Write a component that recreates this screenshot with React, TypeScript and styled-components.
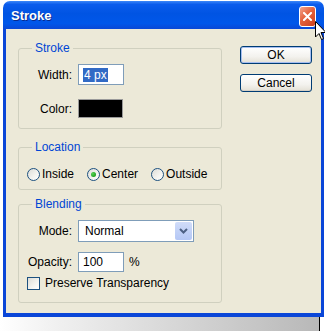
import React from 'react';
import styled, { createGlobalStyle } from 'styled-components';

const TITLE_TEXT = 'Stroke';

const GlobalStyle = createGlobalStyle`
  html, body {
    margin: 0;
    padding: 0;
    background: #FFFFFF;
  }
  body {
    font-family: "Liberation Sans", Arial, sans-serif;
    font-size: 12px;
    color: #000000;
  }
`;

const Screen = styled.div`
  position: relative;
  width: 325px;
  height: 331px;
  overflow: hidden;
  background: #FFFFFF;
  display: flex;
  flex-direction: column;
`;

const Window = styled.div`
  margin: 1px 0 0 3px;
  width: 321px;
  height: 316px;
  display: flex;
  flex-direction: column;
`;

const TitleBar = styled.div`
  height: 28px;
  flex: none;
  border-radius: 7px 7px 0 0;
  background: linear-gradient(#3C87F8 0%, #0B5CEC 12%, #0054E3 45%, #0057EA 80%, #0A48D6 100%);
  display: flex;
  align-items: center;
  padding: 0 8px 0 8px;
`;

const TitleText = styled.div`
  flex: 1;
  font-family: "Liberation Sans", Arial, sans-serif;
  font-weight: bold;
  font-size: 13px;
  color: #FFFFFF;
  text-shadow: 1px 1px 0 #0A2A8C;
`;

const CloseButton = styled.div`
  width: 17px;
  height: 21px;
  box-sizing: border-box;
  border: 1px solid #FFFFFF;
  border-radius: 3px;
  background: linear-gradient(135deg, #F3A48E 0%, #E4623C 45%, #CB3E1C 100%);
  display: flex;
  align-items: center;
  justify-content: center;
  margin-top: 2px;
`;

const Frame = styled.div`
  flex: 1;
  background: #ECE9D8;
  border-left: 3px solid #0A46D8;
  border-right: 3px solid #0A46D8;
  border-bottom: 4px solid #0A46D8;
  display: flex;
  padding: 12px 0 0 12px;
  gap: 18px;
`;

const Groups = styled.div`
  width: 204px;
  display: flex;
  flex-direction: column;
`;

const Group = styled.fieldset<{ $pad: string; $top: number }>`
  margin: ${p => p.$top}px 0 0 0;
  padding: ${p => p.$pad};
  border: 1px solid #D0D0BF;
  border-radius: 3px;
  min-width: 0;
`;

const Legend = styled.legend`
  margin-left: 13px;
  padding: 0 3px;
  color: #0046D5;
  line-height: 14px;
  font-size: 12px;
`;

const FormGrid = styled.div<{ $gap: string }>`
  display: grid;
  grid-template-columns: 53px auto;
  column-gap: 6px;
  row-gap: ${p => p.$gap};
  align-items: center;
`;

const Label = styled.div`
  text-align: right;
  line-height: 14px;
`;

const Field = styled.div<{ $w: number; $h: number }>`
  width: ${p => p.$w}px;
  height: ${p => p.$h}px;
  box-sizing: border-box;
  border: 1px solid #7F9DB9;
  background: #FFFFFF;
  display: flex;
  align-items: center;
  padding-left: 4px;
  line-height: 14px;
`;

const Selected = styled.span`
  background: #316AC5;
  color: #FFFFFF;
  padding: 0 1px;
`;

const Swatch = styled.div`
  width: 45px;
  height: 19px;
  box-sizing: border-box;
  border: 1px solid #9A9A9A;
  background: #000000;
`;

const SelectBox = styled.div`
  width: 116px;
  height: 22px;
  box-sizing: border-box;
  border: 1px solid #7F9DB9;
  background: #FFFFFF;
  display: flex;
  align-items: center;
  padding: 0 1px 0 6px;
`;

const SelectText = styled.div`
  flex: 1;
  line-height: 14px;
`;

const DropButton = styled.div`
  width: 17px;
  height: 18px;
  border-radius: 2px;
  background: linear-gradient(#D0DCF9, #B4C7F5);
  display: flex;
  align-items: center;
  justify-content: center;
`;

const FieldRow = styled.div`
  display: flex;
  align-items: center;
  gap: 5px;
`;

const RadioRow = styled.div`
  display: flex;
  align-items: center;
  gap: 13px;
  padding-left: 8px;
  height: 14px;
`;

const Option = styled.div`
  display: flex;
  align-items: center;
  gap: 2px;
  line-height: 14px;
`;

const Radio = styled.div<{ $checked?: boolean }>`
  width: 13px;
  height: 13px;
  box-sizing: border-box;
  border-radius: 50%;
  border: 1px solid #1C5180;
  background: linear-gradient(135deg, #DCDCD7 0%, #F4F4F0 60%, #FFFFFF 100%);
  display: flex;
  align-items: center;
  justify-content: center;

  &::after {
    content: '';
    display: ${p => (p.$checked ? 'block' : 'none')};
    width: 5px;
    height: 5px;
    border-radius: 50%;
    background: radial-gradient(circle at 35% 35%, #55D355, #21A121 70%);
  }
`;

const CheckRow = styled.div`
  display: flex;
  align-items: center;
  gap: 5px;
  padding-left: 8px;
  margin-top: 4px;
  line-height: 14px;
`;

const CheckBox = styled.div`
  width: 13px;
  height: 13px;
  box-sizing: border-box;
  border: 1px solid #1C5180;
  background: linear-gradient(135deg, #DCDCD7 0%, #F4F4F0 60%, #FFFFFF 100%);
`;

const Buttons = styled.div`
  display: flex;
  flex-direction: column;
  gap: 10px;
  padding-top: 5px;
`;

const Button = styled.div<{ $default?: boolean }>`
  width: 72px;
  height: 18px;
  box-sizing: border-box;
  border: 1px solid #003C74;
  border-radius: 3px;
  background: linear-gradient(#FFFFFF 0%, #F3F2EE 60%, #E3E0D5 100%);
  box-shadow: ${p => (p.$default ? 'inset 0 0 0 1px #A6BEF0' : 'inset 0 -1px 0 #D6D0C5')};
  display: flex;
  align-items: center;
  justify-content: center;
  line-height: 14px;
`;

const Desktop = styled.div`
  width: 319px;
  height: 14px;
  background: linear-gradient(to right, #FFFFFF 0%, #F2F2F2 15%, #B8B8B8 100%);
  border-right: 1px solid #000000;
`;

const Cursor = styled.svg`
  position: absolute;
  left: 315px;
  top: 21px;
`;

const CloseIcon = () => (
  <svg width="9" height="9" viewBox="0 0 9 9">
    <path d="M1 1 L8 8 M8 1 L1 8" stroke="#FFFFFF" strokeWidth="2" strokeLinecap="square" />
  </svg>
);

const Chevron = () => (
  <svg width="9" height="6" viewBox="0 0 9 6">
    <path d="M1 1 L4.5 4.5 L8 1" stroke="#4D6185" strokeWidth="2" fill="none" />
  </svg>
);

const App = () => {
  return (
    <Screen>
      <GlobalStyle />
      <Window>
        <TitleBar>
          <TitleText>{TITLE_TEXT}</TitleText>
          <CloseButton>
            <CloseIcon />
          </CloseButton>
        </TitleBar>
        <Frame>
          <Groups>
            <Group $pad="9px 0 10px 0" $top={0}>
              <Legend>Stroke</Legend>
              <FormGrid $gap="14px">
                <Label>Width:</Label>
                <Field $w={46} $h={21}>
                  <Selected>4 px</Selected>
                </Field>
                <Label>Color:</Label>
                <Swatch />
              </FormGrid>
            </Group>
            <Group $pad="13px 0 8px 0" $top={11}>
              <Legend>Location</Legend>
              <RadioRow>
                <Option>
                  <Radio />
                  Inside
                </Option>
                <Option>
                  <Radio $checked />
                  Center
                </Option>
                <Option>
                  <Radio />
                  Outside
                </Option>
              </RadioRow>
            </Group>
            <Group $pad="9px 0 12px 0" $top={7}>
              <Legend>Blending</Legend>
              <FormGrid $gap="10px">
                <Label>Mode:</Label>
                <SelectBox>
                  <SelectText>Normal</SelectText>
                  <DropButton>
                    <Chevron />
                  </DropButton>
                </SelectBox>
                <Label>Opacity:</Label>
                <FieldRow>
                  <Field $w={46} $h={20}>100</Field>
                  %
                </FieldRow>
              </FormGrid>
              <CheckRow>
                <CheckBox />
                Preserve Transparency
              </CheckRow>
            </Group>
          </Groups>
          <Buttons>
            <Button $default>OK</Button>
            <Button>Cancel</Button>
          </Buttons>
        </Frame>
      </Window>
      <Desktop />
      <Cursor width="12" height="20" viewBox="0 0 12 20">
        <path d="M0.5 0.5 L0.5 16 L4 12.5 L6.5 18.5 L8.5 17.6 L6 11.5 L11 11.5 Z" fill="#FFFFFF" stroke="#000000" strokeWidth="1" />
      </Cursor>
    </Screen>
  );
};

export default App;
